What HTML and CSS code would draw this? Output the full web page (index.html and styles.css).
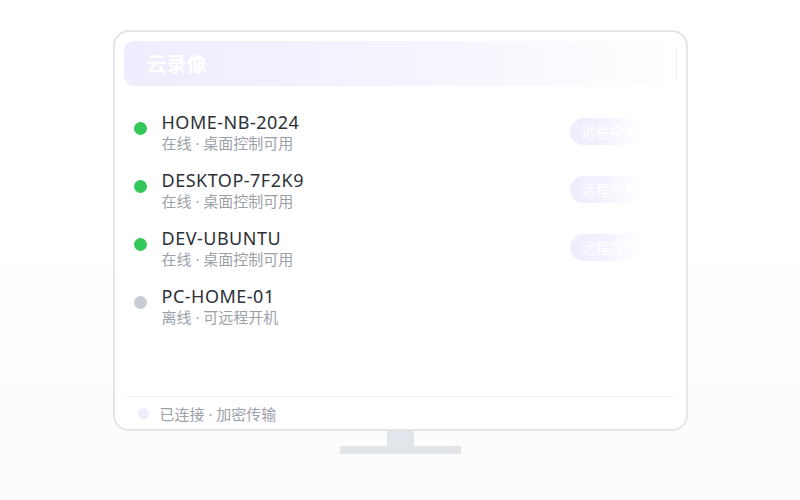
FILE: index.html
```html
<!DOCTYPE html>
<html>
<head>
    <meta charset="UTF-8">
    <title>云录像</title>
    <link rel="stylesheet" href="styles.css">
</head>
<body>
<div class="desk">
    <div class="monitor">
        <div class="screen-head">
            <span class="title">云录像</span>
            <span class="head-line"></span>
        </div>
        <div class="device-list">
            <div class="device">
                <span class="dot online"></span>
                <div class="info">
                    <div class="name">HOME-NB-2024</div>
                    <div class="sub">在线 · 桌面控制可用</div>
                </div>
                <button class="remote">远程控制</button>
            </div>
            <div class="device">
                <span class="dot online"></span>
                <div class="info">
                    <div class="name">DESKTOP-7F2K9</div>
                    <div class="sub">在线 · 桌面控制可用</div>
                </div>
                <button class="remote">远程控制</button>
            </div>
            <div class="device">
                <span class="dot online"></span>
                <div class="info">
                    <div class="name">DEV-UBUNTU</div>
                    <div class="sub">在线 · 桌面控制可用</div>
                </div>
                <button class="remote">远程控制</button>
            </div>
            <div class="device">
                <span class="dot offline"></span>
                <div class="info">
                    <div class="name">PC-HOME-01</div>
                    <div class="sub">离线 · 可远程开机</div>
                </div>
            </div>
        </div>
        <div class="screen-foot">
            <span class="foot-dot"></span>
            <span>已连接 · 加密传输</span>
        </div>
    </div>
    <div class="neck"></div>
    <div class="base"></div>
</div>
</body>
</html>
```

FILE: styles.css
```css
html, body {
    height: 100%;
}
body {
    margin: 0;
    font-family: "Noto Sans", "Noto Sans CJK SC", sans-serif;
    background: linear-gradient(180deg, #ffffff 0%, #ffffff 45%, #fbfbfb 100%);
}
.desk {
    display: flex;
    flex-direction: column;
    align-items: center;
    padding-top: 30px;
}
.monitor {
    width: 575px;
    height: 401px;
    box-sizing: border-box;
    border: 2px solid #e3e5e9;
    border-radius: 16px;
    background: #fff;
    padding: 9px 9px 0;
    display: flex;
    flex-direction: column;
}
.screen-head {
    height: 45px;
    border-radius: 10px;
    background: linear-gradient(90deg, #efecfd 0%, #f6f4fe 55%, #ffffff 100%);
    display: flex;
    align-items: center;
    justify-content: space-between;
    padding-left: 23px;
}
.title {
    color: #fff;
    font-family: "Noto Sans CJK SC", sans-serif;
    font-weight: 700;
    font-size: 20px;
}
.head-line {
    width: 1px;
    height: 32px;
    background: #eceef1;
}
.device-list {
    flex: 1;
    padding: 25px 27px 0 10px;
    display: flex;
    flex-direction: column;
    gap: 16px;
}
.device {
    display: flex;
    align-items: flex-start;
}
.dot {
    width: 13px;
    height: 13px;
    border-radius: 50%;
    margin-top: 11px;
    margin-right: 15px;
    flex-shrink: 0;
}
.online {
    background: #34c759;
}
.offline {
    background: #c9ccd2;
}
.info {
    flex: 1;
}
.name {
    font-size: 18px;
    line-height: 22px;
    color: #2d3138;
    letter-spacing: 0.5px;
}
.sub {
    font-size: 15px;
    line-height: 20px;
    color: #9ca1a9;
}
.remote {
    align-self: center;
    width: 80px;
    height: 27px;
    margin-top: -2px;
    border: none;
    border-radius: 14px;
    background: linear-gradient(90deg, #efecfd 0%, #f4f2fe 45%, #ffffff 85%);
    color: #fff;
    font-family: "Noto Sans CJK SC", sans-serif;
    font-size: 14px;
    text-align: left;
    padding: 0 0 0 12px;
}
.screen-foot {
    height: 32px;
    margin: 0 2px;
    border-top: 1px solid #eef0f3;
    display: flex;
    align-items: center;
    padding-left: 12px;
    font-size: 15px;
    color: #9ca1a9;
}
.foot-dot {
    width: 11px;
    height: 11px;
    border-radius: 50%;
    background: #efecfd;
    margin-right: 11px;
}
.neck {
    width: 27px;
    height: 15px;
    background: #e2e5ea;
}
.base {
    width: 121px;
    height: 8px;
    background: #e2e5ea;
}
```
